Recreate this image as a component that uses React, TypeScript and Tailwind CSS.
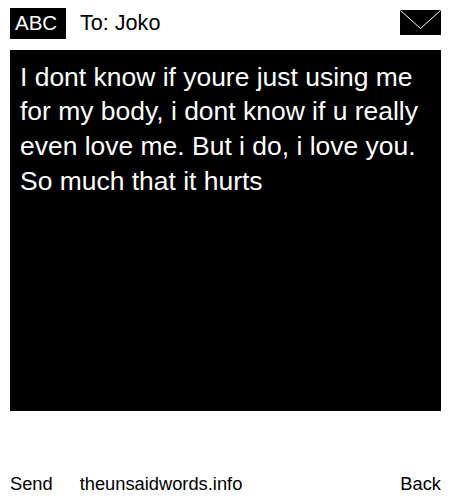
export default function App() {
  return (
    <div className="w-[450px] h-[500px] bg-white text-black font-['Liberation_Sans',Arial,sans-serif] flex flex-col pl-[10px] pr-[9px] overflow-hidden">
      <div className="h-[50px] flex justify-between pt-[8px]">
        <div className="flex items-start">
          <span className="bg-black text-white text-[20.5px] leading-[30px] h-[31px] w-[56px] pl-[5px]">ABC</span>
          <span className="ml-[14px] text-[21.6px] leading-[30px]">To: Joko</span>
        </div>
        <svg width="41" height="25" viewBox="0 0 41 25" className="block mt-[2px]">
          <rect width="41" height="25" fill="#000" />
          <path d="M0.5 0.5 L20.5 18.5 L40.5 0.5" fill="none" stroke="#fff" strokeWidth="1" />
        </svg>
      </div>
      <div className="h-[361px] bg-black text-white text-[26.46px] leading-[34.67px] px-[10px] pt-[9.5px] pb-[10px]">
        I dont know if youre just using me for my body, i dont know if u really even love me. But i do, i love you. So much that it hurts
      </div>
      <div className="flex-1 flex items-end justify-between pb-[4px] text-[18.3px] leading-[24px]">
        <div className="flex">
          <span>Send</span>
          <span className="ml-[27px]">theunsaidwords.info</span>
        </div>
        <span>Back</span>
      </div>
    </div>
  );
}
